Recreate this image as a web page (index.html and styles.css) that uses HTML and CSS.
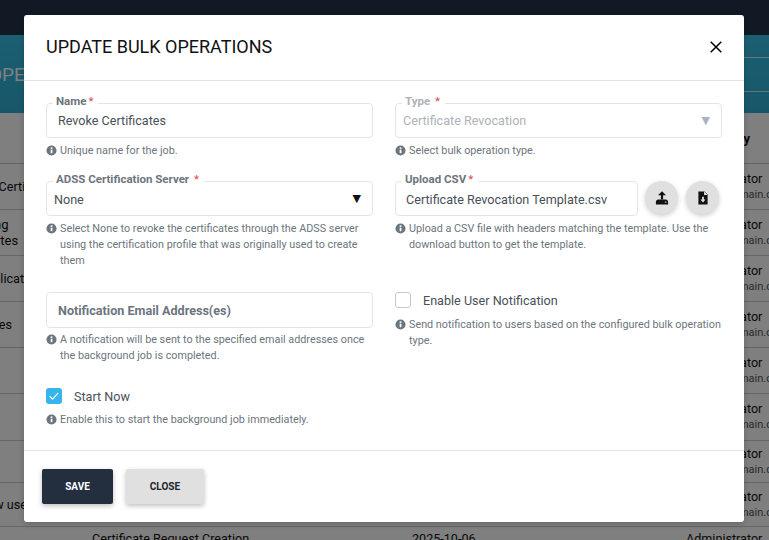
FILE: index.html
```html
<!DOCTYPE html>
<html lang="en">
<head>
<meta charset="utf-8">
<title>Update Bulk Operations</title>
<link rel="stylesheet" href="styles.css">
</head>
<body>
<div class="page">
  <div class="topbar"></div>
  <div class="banner"><span class="banner-title">BULK OPERATIONS</span><div class="banner-field"></div></div>
  <div class="thead"><span class="th-right">Created By</span></div>
  <div class="row"><span class="c1 r1">Revoke Certificates</span><span class="c2">Administrator<small>admin@domain.com</small></span></div>
  <div class="row"><span class="c1 two">Pending<br>Certificates</span><span class="c2">Administrator<small>admin@domain.com</small></span></div>
  <div class="row"><span class="c1 r3">Application Update</span><span class="c2">Administrator<small>admin@domain.com</small></span></div>
  <div class="row"><span class="c1 r4">Expired Entries</span><span class="c2">Administrator<small>admin@domain.com</small></span></div>
  <div class="row"><span class="c1"></span><span class="c2">Administrator<small>admin@domain.com</small></span></div>
  <div class="row tall-row"><span class="c1"></span><span class="c2">Administrator<small>admin@domain.com</small></span></div>
  <div class="row low-row"><span class="c1"></span><span class="c2">Administrator<small>admin@domain.com</small></span></div>
  <div class="row short"><span class="c1 r8">Add new users</span><span class="c2">Administrator<small>admin@domain.com</small></span></div>
  <div class="row last"><span class="c0">Certificate Request Creation</span><span class="cd">2025-10-06</span><span class="c3">Administrator</span></div>
</div>

<div class="overlay"></div>

<section class="modal">
  <header class="modal-head">
    <h1>UPDATE BULK OPERATIONS</h1>
    <svg class="close-x" width="12" height="12" viewBox="0 0 12 12"><path d="M.7.7l10.6 10.6M11.3.7L.7 11.3" stroke="#000" stroke-width="1.5" fill="none"/></svg>
  </header>
  <div class="modal-body">
    <div class="col">
      <div class="field f1">
        <div class="box"><span class="legend">Name<i>*</i></span><span class="val">Revoke Certificates</span></div>
        <p class="hint"><svg class="info" viewBox="0 0 12 12"><circle cx="6" cy="6" r="5.5" fill="#6c757d"/><rect x="5.1" y="5.1" width="1.9" height="3.8" fill="#fff"/><rect x="5.1" y="2.6" width="1.9" height="1.7" fill="#fff"/></svg>Unique name for the job.</p>
      </div>
      <div class="field f2">
        <div class="box"><span class="legend">ADSS Certification Server <i class="gap">*</i></span><span class="val sel">None</span><span class="arrow">▼</span></div>
        <p class="hint"><svg class="info" viewBox="0 0 12 12"><circle cx="6" cy="6" r="5.5" fill="#6c757d"/><rect x="5.1" y="5.1" width="1.9" height="3.8" fill="#fff"/><rect x="5.1" y="2.6" width="1.9" height="1.7" fill="#fff"/></svg>Select None to revoke the certificates through the ADSS server using the certification profile that was originally used to create them</p>
      </div>
      <div class="field f3">
        <div class="box tall"><span class="val strong">Notification Email Address(es)</span></div>
        <p class="hint"><svg class="info" viewBox="0 0 12 12"><circle cx="6" cy="6" r="5.5" fill="#6c757d"/><rect x="5.1" y="5.1" width="1.9" height="3.8" fill="#fff"/><rect x="5.1" y="2.6" width="1.9" height="1.7" fill="#fff"/></svg>A notification will be sent to the specified email addresses once the background job is completed.</p>
      </div>
      <div class="field f4">
        <div class="check-row">
          <span class="check on"><svg width="16" height="16" viewBox="0 0 16 16"><path d="M3.6 8.2l3 3 5.6-6.4" stroke="#fff" stroke-width="1.1" fill="none"/></svg></span>
          <span class="check-label">Start Now</span>
        </div>
        <p class="hint"><svg class="info" viewBox="0 0 12 12"><circle cx="6" cy="6" r="5.5" fill="#6c757d"/><rect x="5.1" y="5.1" width="1.9" height="3.8" fill="#fff"/><rect x="5.1" y="2.6" width="1.9" height="1.7" fill="#fff"/></svg>Enable this to start the background job immediately.</p>
      </div>
    </div>
    <div class="col">
      <div class="field f1">
        <div class="box"><span class="legend muted">Type <i class="gap">*</i></span><span class="val sel muted-val">Certificate Revocation</span><span class="arrow muted-arrow">▼</span></div>
        <p class="hint"><svg class="info" viewBox="0 0 12 12"><circle cx="6" cy="6" r="5.5" fill="#6c757d"/><rect x="5.1" y="5.1" width="1.9" height="3.8" fill="#fff"/><rect x="5.1" y="2.6" width="1.9" height="1.7" fill="#fff"/></svg>Select bulk operation type.</p>
      </div>
      <div class="field f2">
        <div class="upload">
          <div class="box grow"><span class="legend">Upload CSV<i>*</i></span><span class="val ink">Certificate Revocation Template.csv</span></div>
          <button class="round" type="button" aria-label="Upload"><svg width="14" height="14" viewBox="0 0 14 14"><path d="M7 .2L3 4.2h2.9v4.4h2.2V4.2H11z" fill="#111"/><path d="M.9 13.6V11c0-1.4 1-2.4 2.4-2.4h7.4c1.4 0 2.4 1 2.4 2.4v2.6z" fill="#111"/><rect x="9.8" y="10.6" width="1.6" height="1" fill="#ddd"/></svg></button>
          <button class="round" type="button" aria-label="Download"><svg width="14" height="14" viewBox="0 0 14 14"><path d="M2.4.4h6L11.6 3.6v10H2.4z" fill="#111"/><path d="M8 .4V4h3.6z" fill="#ddd"/><path d="M6.1 5.8h1.8v2.8h1.6L7 11.4 4.5 8.6h1.6z" fill="#ddd"/></svg></button>
        </div>
        <p class="hint"><svg class="info" viewBox="0 0 12 12"><circle cx="6" cy="6" r="5.5" fill="#6c757d"/><rect x="5.1" y="5.1" width="1.9" height="3.8" fill="#fff"/><rect x="5.1" y="2.6" width="1.9" height="1.7" fill="#fff"/></svg>Upload a CSV file with headers matching the template. Use the download button to get the template.</p>
      </div>
      <div class="field f5">
        <div class="check-row">
          <span class="check"></span>
          <span class="check-label">Enable User Notification</span>
        </div>
        <p class="hint"><svg class="info" viewBox="0 0 12 12"><circle cx="6" cy="6" r="5.5" fill="#6c757d"/><rect x="5.1" y="5.1" width="1.9" height="3.8" fill="#fff"/><rect x="5.1" y="2.6" width="1.9" height="1.7" fill="#fff"/></svg>Send notification to users based on the configured bulk operation type.</p>
      </div>
    </div>
  </div>
  <footer class="modal-foot">
    <button class="btn primary" type="button">SAVE</button>
    <button class="btn secondary" type="button">CLOSE</button>
  </footer>
</section>
</body>
</html>
```
FILE: styles.css
```css
* { box-sizing: border-box; }
html, body { margin: 0; height: 100%; overflow: hidden; }
body { font-family: Roboto, "Liberation Sans", sans-serif; background: #fff; color: #212529; }

.page { width: 769px; height: 540px; overflow: hidden; }
.topbar { height: 35px; background: #223448; }
.banner { position: relative; height: 78px; background: linear-gradient(180deg, #38bfe6, #30aed2); display: flex; align-items: center; }
.banner-title { font-size: 19px; color: #fff; margin-left: -62px; white-space: nowrap; }
.banner-field { position: absolute; right: 0; top: 22px; width: 120px; height: 35px; border-top: 1px solid rgba(255, 255, 255, .75); border-bottom: 1px solid rgba(255, 255, 255, .75); }
.thead { height: 51px; background: #fff; border-bottom: 1px solid #ccc; display: flex; align-items: center; justify-content: flex-end; padding-right: 19px; font-size: 13px; font-weight: 700; color: #111; }
.row { height: 46px; border-bottom: 1px solid #ccc; display: flex; justify-content: space-between; align-items: center; background: #fff; font-size: 12.6px; color: #111; }
.row.tall-row { height: 47px; }
.row.low-row { height: 42px; }
.row.short { height: 44px; }
.row.last { height: 40px; align-items: flex-start; padding-top: 4px; justify-content: flex-start; border: 0; }
.c1 { white-space: nowrap; flex: none; }
.c1.r1 { margin-left: -45px; }
.c1.r3 { margin-left: -22px; }
.c1.r4 { width: 100px; margin-left: -88px; text-align: right; }
.c1.r8 { margin-left: -45px; }
.c1.two { width: 80px; margin-left: -55px; line-height: 16px; text-align: center; font-size: 13px; }
.c2 { display: block; width: 83px; line-height: 16px; white-space: nowrap; overflow: hidden; }
.c2 small { display: block; font-size: 11px; color: #555; }
.c0 { margin-left: 92px; width: 320px; flex: none; }
.cd { width: 274px; flex: none; }
.c3 { flex: none; }

.overlay { position: absolute; inset: 0; background: rgba(0, 0, 0, .5); }

.modal { position: absolute; left: 24px; top: 15px; width: 720px; height: 507px; background: #fff; border-radius: 3px; display: flex; flex-direction: column; box-shadow: 0 2px 6px rgba(0, 0, 0, .2); }
.modal-head { height: 66px; flex: none; border-bottom: 1px solid #e2e5ec; padding: 0 22px; display: flex; align-items: center; justify-content: space-between; }
.modal-head h1 { margin: 0 0 1px; font-size: 18px; line-height: 22px; font-weight: 400; color: #111; }
.close-x { margin-bottom: 2px; }

.modal-body { flex: 1; padding: 22px 22px 0; display: grid; grid-template-columns: 327px 327px; column-gap: 22px; border-bottom: 1px solid #e2e5ec; }
.col { display: flex; flex-direction: column; min-width: 0; }
.field { flex: none; }
.f1 { height: 78px; }
.f2 { height: 111px; }
.f3 { height: 96px; }

.box { position: relative; height: 35px; border: 1px solid #e2e5ec; border-radius: 4px; display: flex; align-items: center; padding: 0 11px; background: #fff; }
.box.tall { height: 36px; }
.box.grow { flex: 1; min-width: 0; }
.legend { position: absolute; left: 6px; top: -11px; padding: 0 5px 0 3px; background: #fff; font-size: 11.5px; line-height: 16px; font-weight: 700; color: #6c757d; white-space: nowrap; }
.legend i { color: #d9434e; font-style: normal; font-weight: 400; margin-left: 2px; }
.legend.muted { color: #aeb2b9; }
.val { font-size: 12.6px; color: #495057; white-space: nowrap; }
.f2 .val { padding-top: 2px; }
.val.sel { margin-left: -4px; }
.val.muted-val { color: #aeb2b9; }
.val.ink { margin-left: -1px; }
.val.strong { font-weight: 700; color: #6c757d; }
.arrow { position: absolute; right: 11px; top: 10px; font-size: 11px; line-height: 14px; color: #111; font-family: "DejaVu Sans", sans-serif; }
.arrow.muted-arrow { color: #aeb2b9; }

.hint { margin: 5px 0 0; padding-left: 14px; position: relative; font-size: 10.8px; line-height: 16px; color: #6c757d; }
.f3 .hint { margin-top: 4px; }
.info { position: absolute; left: 0; top: 2px; width: 11px; height: 11px; }

.upload { display: flex; align-items: flex-start; gap: 7px; padding-right: 3px; }
.round { width: 33px; height: 33px; border: 0; padding: 0; border-radius: 50%; background: #e0e0e0; box-shadow: 0 2px 5px rgba(0, 0, 0, .2); display: flex; align-items: center; justify-content: center; flex: none; }
.round + .round { margin-left: 1px; }

.check-row { display: flex; align-items: center; height: 16px; gap: 12px; }
.check { width: 16px; height: 16px; border: 1px solid #c4c7cd; border-radius: 3px; background: #fff; flex: none; display: block; }
.check.on { background: #36b5ec; border: 0; }
.check.on svg { display: block; }
.check-label { font-size: 12.6px; color: #495057; }
.f4 .hint { margin-top: 8px; }
.f5 .hint { margin-top: 9px; }

.modal-foot { height: 71px; flex: none; padding: 18px; display: flex; gap: 13px; align-items: flex-start; }
.btn { height: 35px; border: 0; border-radius: 2px; font-family: inherit; font-size: 10px; font-weight: 700; padding: 0; box-shadow: 0 2px 5px rgba(0, 0, 0, .25); }
.btn.primary { width: 71px; background: #232e3f; color: #fff; }
.btn.secondary { width: 78px; background: #e0e0e0; color: #212529; }
```
